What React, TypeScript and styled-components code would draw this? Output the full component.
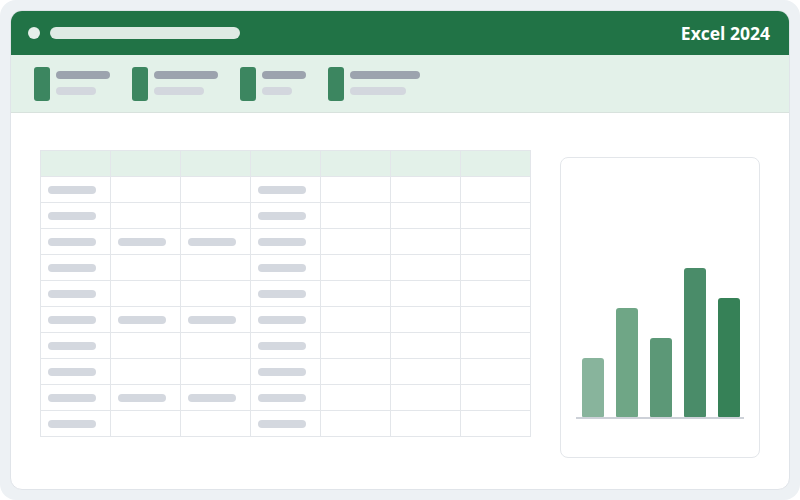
import styled, { createGlobalStyle } from 'styled-components';

const GlobalStyle = createGlobalStyle`
  html, body {
    margin: 0;
    padding: 0;
    background: #ffffff;
  }
  * {
    box-sizing: border-box;
  }
`;

const Frame = styled.div`
  width: 800px;
  height: 500px;
  padding: 10px;
  background: #edf1f4;
  border-radius: 16px;
`;

const Window = styled.div`
  height: 100%;
  display: flex;
  flex-direction: column;
  background: #ffffff;
  border: 1px solid #e0e4e9;
  border-radius: 12px;
  overflow: hidden;
`;

const TitleBar = styled.div`
  height: 44px;
  flex: none;
  display: flex;
  align-items: center;
  gap: 10px;
  padding: 0 19px 0 17px;
  background: #217346;
`;

const Dot = styled.div`
  width: 12px;
  height: 12px;
  border-radius: 50%;
  background: #e6efea;
`;

const AddressBar = styled.div`
  width: 190px;
  height: 12px;
  border-radius: 6px;
  background: #dfeae4;
`;

const Title = styled.div`
  margin-left: auto;
  color: #ffffff;
  font-family: 'Open Sans', 'Noto Sans', sans-serif;
  font-weight: 700;
  font-size: 17.5px;
  line-height: 22px;
`;

const Ribbon = styled.div`
  height: 58px;
  flex: none;
  display: flex;
  align-items: flex-start;
  gap: 22px;
  padding: 12px 0 0 23px;
  background: #e3f1e9;
  border-bottom: 1px solid #d8e2dd;
`;

const Tool = styled.div`
  display: flex;
  gap: 6px;
`;

const ToolIcon = styled.div`
  width: 16px;
  height: 34px;
  border-radius: 3px;
  background: #3c8660;
`;

const ToolLabels = styled.div`
  display: flex;
  flex-direction: column;
  gap: 8px;
  padding-top: 4px;
`;

const Line = styled.div<{ $w: number; $dark?: boolean }>`
  width: ${(p) => p.$w}px;
  height: 8px;
  border-radius: 4px;
  background: ${(p) => (p.$dark ? '#9ca3ae' : '#d3d7de')};
`;

const Body = styled.div`
  flex: 1;
  display: flex;
  align-items: flex-start;
  gap: 29px;
  padding: 37px 0 0 29px;
`;

const Sheet = styled.div`
  display: grid;
  grid-template-columns: repeat(7, 69px);
  grid-auto-rows: 25px;
  gap: 1px;
  padding: 1px;
  background: #e3e6ea;
`;

const Cell = styled.div<{ $head?: boolean }>`
  display: flex;
  align-items: center;
  padding-left: 7px;
  background: ${(p) => (p.$head ? '#e3f1e9' : '#ffffff')};
`;

const CellBar = styled.div`
  width: 48px;
  height: 8px;
  border-radius: 4px;
  background: #d4d8df;
`;

const ChartCard = styled.div`
  width: 200px;
  height: 301px;
  margin-top: 7px;
  display: flex;
  flex-direction: column;
  justify-content: flex-end;
  align-items: center;
  padding-bottom: 38px;
  border: 1px solid #e3e6ea;
  border-radius: 8px;
`;

const Bars = styled.div`
  width: 168px;
  display: flex;
  align-items: flex-end;
  justify-content: center;
  gap: 12px;
  padding-left: 2px;
  border-bottom: 2px solid #cdd1d8;
`;

const Bar = styled.div<{ $h: number; $c: string }>`
  width: 22px;
  height: ${(p) => p.$h}px;
  border-radius: 3px 3px 1px 1px;
  background: ${(p) => p.$c};
`;

const tools = [
  { top: 54, bottom: 40 },
  { top: 64, bottom: 50 },
  { top: 44, bottom: 30 },
  { top: 70, bottom: 56 },
];

const bars = [
  { h: 59, c: '#88b49c' },
  { h: 109, c: '#6fa686' },
  { h: 79, c: '#5c9877' },
  { h: 149, c: '#4a8c69' },
  { h: 119, c: '#368157' },
];

const fullRows = [2, 5, 8];

export default function App() {
  const rows = Array.from({ length: 10 }, (_, r) => r);
  return (
    <>
      <GlobalStyle />
      <Frame>
        <Window>
          <TitleBar>
            <Dot />
            <AddressBar />
            <Title>Excel 2024</Title>
          </TitleBar>
          <Ribbon>
            {tools.map((t, i) => (
              <Tool key={i}>
                <ToolIcon />
                <ToolLabels>
                  <Line $w={t.top} $dark />
                  <Line $w={t.bottom} />
                </ToolLabels>
              </Tool>
            ))}
          </Ribbon>
          <Body>
            <Sheet>
              {Array.from({ length: 7 }, (_, c) => (
                <Cell key={`h${c}`} $head />
              ))}
              {rows.map((r) =>
                Array.from({ length: 7 }, (_, c) => {
                  const filled = c === 0 || c === 3 || ((c === 1 || c === 2) && fullRows.includes(r));
                  return <Cell key={`${r}-${c}`}>{filled && <CellBar />}</Cell>;
                })
              )}
            </Sheet>
            <ChartCard>
              <Bars>
                {bars.map((b, i) => (
                  <Bar key={i} $h={b.h} $c={b.c} />
                ))}
              </Bars>
            </ChartCard>
          </Body>
        </Window>
      </Frame>
    </>
  );
}
